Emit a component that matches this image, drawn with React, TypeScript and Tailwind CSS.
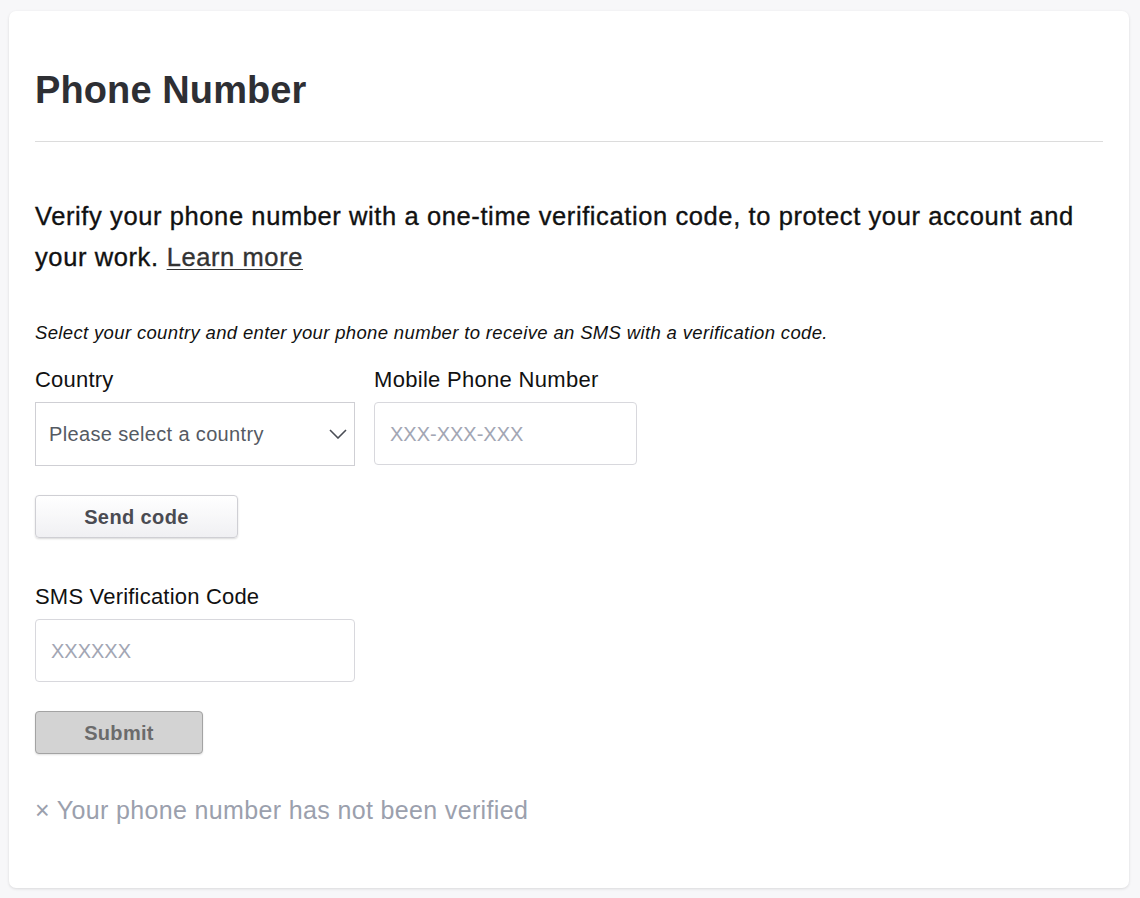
import React from "react";

export default function App() {
  return (
    <div className="min-h-[898px] w-[1140px] bg-[#f7f7f9] pt-[11px] pl-[9px] font-['Liberation_Sans',Arial,sans-serif]">
      <div className="w-[1120px] h-[877px] bg-white rounded-[7px] shadow-[0_1px_3px_rgba(0,0,0,0.12)] px-[26px] pt-[56px]">
        <h1 className="text-[38px] leading-[46px] font-bold text-[#2e2f34] tracking-[0.1px]">Phone Number</h1>
        <div className="mt-[28px] h-px w-[1068px] bg-[#dcdcdc]" />
        <div className="mt-[54px] text-[25.5px] leading-[41px] tracking-[0.6px] text-[#111] [-webkit-text-stroke:0.35px_#111] w-[1068px]">
          <div>Verify your phone number with a one-time verification code, to protect your account and</div>
          <div className="flex gap-[8px]">
            <span>your work.</span>
            <a href="#" className="underline text-[#333] [-webkit-text-stroke:0.35px_#333] decoration-1 underline-offset-[3px]">Learn more</a>
          </div>
        </div>
        <p className="mt-[43px] text-[18.5px] leading-[24px] tracking-[0.35px] italic text-[#111]">
          Select your country and enter your phone number to receive an SMS with a verification code.
        </p>
        <div className="mt-[23px] flex gap-[19px]">
          <div className="flex flex-col">
            <label className="text-[22px] leading-[24px] tracking-[0.2px] text-[#111]">Country</label>
            <div className="mt-[10px] w-[320px] h-[64px] border border-[#cfcfd4] flex items-center justify-between pl-[13px] pr-[7px]">
              <span className="text-[20px] tracking-[0.35px] text-[#555a63]">Please select a country</span>
              <svg width="18" height="10" viewBox="0 0 18 10" fill="none">
                <path d="M1 1l8 8 8-8" stroke="#4a4d55" strokeWidth="1.6" />
              </svg>
            </div>
          </div>
          <div className="flex flex-col">
            <label className="text-[22px] leading-[24px] tracking-[0.3px] text-[#111]">Mobile Phone Number</label>
            <div className="mt-[10px] w-[263px] h-[63px] border border-[#d8d8dd] rounded-[4px] flex items-center pl-[15px]">
              <span className="text-[20px] text-[#a2a6b4]">XXX-XXX-XXX</span>
            </div>
          </div>
        </div>
        <button className="mt-[29px] w-[203px] h-[43px] rounded-[4px] border border-[#cfcfd4] bg-gradient-to-b from-white to-[#f0f0f3] shadow-[0_1px_2px_rgba(0,0,0,0.15)] text-[20px] tracking-[0.4px] font-bold text-[#4a4b52]">
          Send code
        </button>
        <div className="mt-[47px] flex flex-col">
          <label className="text-[22px] leading-[24px] tracking-[0.2px] text-[#111]">SMS Verification Code</label>
          <div className="mt-[10px] w-[320px] h-[63px] border border-[#d8d8dd] rounded-[4px] flex items-center pl-[15px]">
            <span className="text-[20px] text-[#a2a6b4]">XXXXXX</span>
          </div>
        </div>
        <button className="mt-[29px] w-[168px] h-[43px] rounded-[4px] border border-[#a3a3a3] bg-[#d3d3d3] shadow-[0_1px_2px_rgba(0,0,0,0.12)] text-[20px] tracking-[0.3px] font-bold text-[#6b6b6b]">
          Submit
        </button>
        <p className="mt-[40px] text-[25px] leading-[32px] tracking-[0.35px] text-[#9ba0ad]">× Your phone number has not been verified</p>
      </div>
    </div>
  );
}
